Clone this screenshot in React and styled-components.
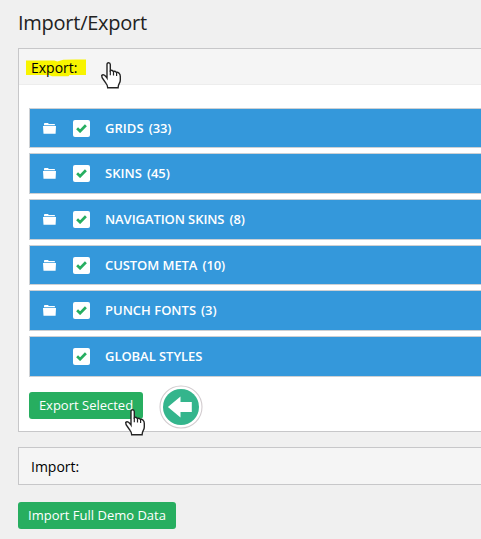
import React from "react";
import styled, { createGlobalStyle } from "styled-components";

const GlobalStyle = createGlobalStyle`
  * { box-sizing: border-box; }
  html, body { margin: 0; background: #f0f0f0; overflow: hidden; }
  body { font-family: "Open Sans", "Noto Sans", sans-serif; color: #000; }
`;

const Page = styled.main`
  width: 481px;
  height: 539px;
  padding: 8px 0 0 18px;
  overflow: hidden;
  background: #f0f0f0;
`;

const Title = styled.h1`
  margin: 0;
  height: 40px;
  font-size: 20px;
  line-height: 29px;
  font-weight: 400;
  letter-spacing: -0.25px;
  color: #222;
`;

const Panel = styled.section`
  width: 500px;
  height: ${(p) => p.$height}px;
  margin-bottom: ${(p) => p.$gap}px;
  border: 1px solid #c7c7c9;
  background: #fff;
`;

const PanelHeader = styled.header`
  position: relative;
  display: flex;
  align-items: center;
  height: 36px;
  padding: 2px 0 0 12px;
  background: #f5f5f5;
  border-bottom: ${(p) => (p.$divided ? "1px solid #ededed" : "0")};
  font-size: 14px;
  line-height: 20px;
`;

const HeaderText = styled.span`
  position: relative;
`;

const Marker = styled.svg`
  position: absolute;
  left: 7px;
  top: 9px;
`;

const List = styled.ul`
  display: grid;
  grid-template-rows: 40px 41px 41px 40px 41px 41px;
  gap: 5px;
  margin: 0;
  padding: 23px 0 0 10px;
  list-style: none;
`;

const Row = styled.li`
  border: 1px solid #ccd0d4;
  background: #3498db;
  color: #fff;
  font-size: 13px;
  font-weight: 600;
  line-height: 19px;
  white-space: nowrap;
`;

const RowLine = styled.div`
  display: flex;
  align-items: center;
  height: 38px;
  padding: 1px 0 0 13px;
`;

const FolderSlot = styled.span`
  display: flex;
  width: 30px;
`;

const CheckBox = styled.span`
  display: flex;
  align-items: center;
  justify-content: center;
  width: 17px;
  height: 17px;
  margin-right: 15px;
  border-radius: 2px;
  background: #fff;
`;

const Label = styled.span`
  letter-spacing: ${(p) => p.$tracking || 0}px;
`;

const Count = styled.span`
  margin-left: 5px;
  letter-spacing: -0.1px;
`;

const Actions = styled.div`
  display: flex;
  align-items: center;
  gap: 16px;
  height: 44px;
  margin: 8px 0 0 10px;
`;

const Button = styled.button`
  position: relative;
  width: ${(p) => p.$width}px;
  height: 27px;
  padding: 0;
  border: 0;
  border-radius: 3px;
  background: #27ae60;
  color: #fff;
  font-family: inherit;
  font-size: 13px;
  line-height: 27px;
  white-space: nowrap;
`;

const ExportButton = styled(Button)`
  margin-top: -3px;
`;

const Cursor = styled.svg`
  position: absolute;
  left: ${(p) => p.$x}px;
  top: ${(p) => p.$y}px;
`;

const rows = [
  { label: "GRIDS", count: 33, folder: true, tracking: 0.05 },
  { label: "SKINS", count: 45, folder: true, tracking: 0.05 },
  { label: "NAVIGATION SKINS", count: 8, folder: true, tracking: -0.08 },
  { label: "CUSTOM META", count: 10, folder: true, tracking: -0.07 },
  { label: "PUNCH FONTS", count: 3, folder: true, tracking: 0 },
  { label: "GLOBAL STYLES", folder: false, tracking: -0.05 },
];

const Folder = () => (
  <svg width="13" height="13" viewBox="0 0 13 13" fill="#fff">
    <path d="M1 3.2V1.6L1.8.9H5l.8 1.1h5.6l.6.6v.6zM0 4.1h13l-.4 7.6H.5z" />
  </svg>
);

const Check = () => (
  <svg width="11" height="9" viewBox="0 0 11 9">
    <path d="M1.1 4.2 4.1 7.2 9.9 1.3" fill="none" stroke="#27ae60" strokeWidth="2.7" />
  </svg>
);

const Pointer = ({ x, y }) => (
  <Cursor $x={x} $y={y} width="20" height="27" viewBox="0 0 20 27">
    <path
      d="M6 16V2.6Q6 .7 7.6.7T9.3 2.6v6.1q1.3-1 3.1.8 1.6-.7 3 .9 1.8-.5 2.9 1.1 1 1 1 3v3.4q0 1.7-1 3.4-1.2 2-1.2 4.5H6.7q0-2.4-1.5-4.2l-3-4.3Q.7 15.7.7 13.5q1.1-1.5 2.8-.3Q5 14.3 6 16z"
      fill="#fff"
      stroke="#242424"
      strokeWidth="1.4"
    />
    <path d="M9.3 8.5v4.8M12.5 9.5v4M15.6 10.6v3.4" stroke="#242424" strokeWidth="1.2" />
  </Cursor>
);

const BackArrow = () => (
  <svg width="44" height="44" viewBox="0 0 44 44">
    <circle cx="22" cy="22" r="21" fill="#fff" stroke="#d2cccf" strokeWidth="1.1" />
    <circle cx="22" cy="22" r="18" fill="#34b58c" />
    <path d="M8.9 22 21.5 11.5V17h11.3v10H21.5v5.5z" fill="#fff" />
  </svg>
);

export default function App() {
  return (
    <>
      <GlobalStyle />
      <Page>
        <Title>Import/Export</Title>
        <Panel $height={384} $gap={15}>
          <PanelHeader $divided>
            <Marker width="61" height="19" viewBox="0 0 61 19">
              <path d="M0 2.5h28.5l2.8 1 6-1.8L49 1.5h11V17H43.5l-1 1.2H26L23 17H0z" fill="#f8f400" />
            </Marker>
            <HeaderText>Export:</HeaderText>
            <Pointer x={82} y={13} />
          </PanelHeader>
          <List>
            {rows.map((row) => (
              <Row key={row.label}>
                <RowLine>
                  <FolderSlot>{row.folder && <Folder />}</FolderSlot>
                  <CheckBox><Check /></CheckBox>
                  <Label $tracking={row.tracking}>{row.label}</Label>
                  {row.count && <Count>{`(${row.count})`}</Count>}
                </RowLine>
              </Row>
            ))}
          </List>
          <Actions>
            <ExportButton $width={114}>
              Export Selected
              <Pointer x={96} y={17} />
            </ExportButton>
            <BackArrow />
          </Actions>
        </Panel>
        <Panel $height={38} $gap={17}>
          <PanelHeader>Import:</PanelHeader>
        </Panel>
        <Button $width={158}>Import Full Demo Data</Button>
      </Page>
    </>
  );
}
